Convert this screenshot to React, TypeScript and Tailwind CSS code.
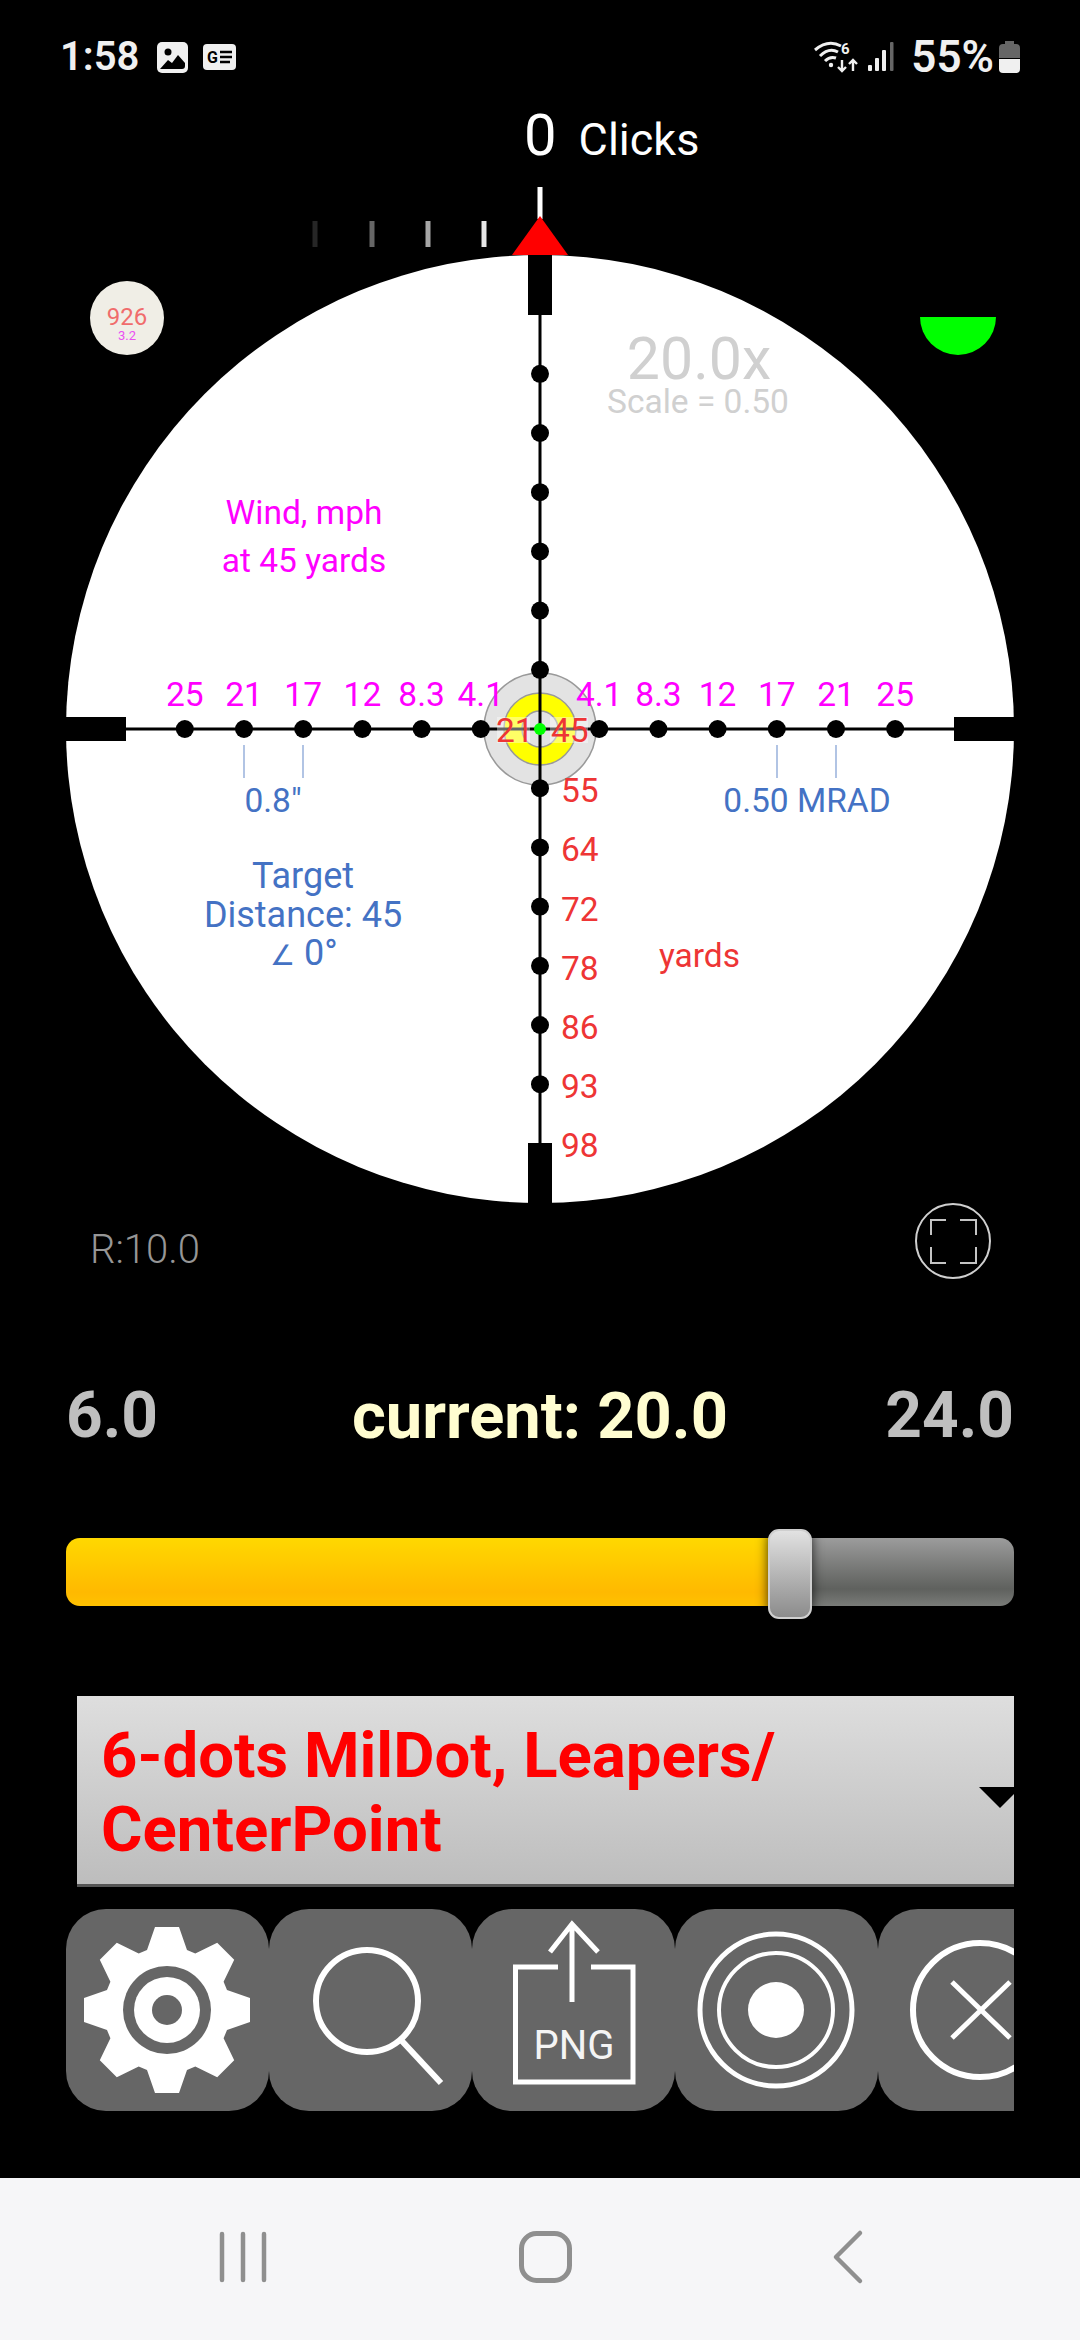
const DOT_STEP = 59.2
const STEPS = [1, 2, 3, 4, 5, 6]
const WIND = ['4.1', '8.3', '12', '17', '21', '25']
const RANGE = ['55', '64', '72', '78', '86', '93', '98']
const FADE_TICKS = [
  { x: 315, color: '#262626' },
  { x: 372, color: '#666666' },
  { x: 428, color: '#a6a6a6' },
  { x: 484, color: '#e6e6e6' },
]

function gearPath(cx: number, cy: number) {
  const pts: string[] = []
  const root = 60
  const tip = 83
  for (let i = 0; i < 8; i++) {
    const a = (i * Math.PI) / 4
    const c = Math.cos(a)
    const s = Math.sin(a)
    const local = [
      [-20, -root],
      [-12, -tip],
      [12, -tip],
      [20, -root],
    ]
    local.forEach(([x, y]) => {
      pts.push(`${(cx + x * c - y * s).toFixed(1)},${(cy + x * s + y * c).toFixed(1)}`)
    })
  }
  return `M${pts.join('L')}Z`
}

function StatusBar() {
  return (
    <div className="h-[100px] pt-[14px] pl-[60px] pr-[60px] flex items-center justify-between text-[#f0f0f0]">
      <div className="flex items-center">
        <span className="text-[40px] font-semibold leading-none">1:58</span>
        {/* gallery */}
        <svg className="ml-[18px]" width="31" height="31" viewBox="0 0 31 31">
          <rect width="31" height="31" rx="5" fill="#f0f0f0" />
          <circle cx="11" cy="10" r="3.5" fill="#000" />
          <path d="M3 27 L11 18 L15 21 L21 13 L28 21 L28 24 Q28 27 25 27 Z" fill="#000" />
        </svg>
        {/* news */}
        <svg className="ml-[15px]" width="33" height="26" viewBox="0 0 33 26">
          <rect width="33" height="26" rx="4" fill="#f0f0f0" />
          <text x="4" y="19" fontSize="16" fontWeight="700" fill="#000">G</text>
          <path d="M17 8 H29 M17 13 H29 M17 18 H27" stroke="#000" strokeWidth="2.4" />
        </svg>
      </div>
      <div className="flex items-center">
        {/* wifi 6 */}
        <svg width="48" height="32" viewBox="0 0 48 32" fill="none">
          <path d="M1 9 Q14 -2 27 5" stroke="#f0f0f0" strokeWidth="3" />
          <path d="M6 15 Q15 6 24 11" stroke="#f0f0f0" strokeWidth="3" />
          <path d="M11 20 Q16 15 22 17" stroke="#f0f0f0" strokeWidth="3" />
          <circle cx="17" cy="24" r="2.2" fill="#f0f0f0" />
          <text x="27" y="13" fontSize="15" fontWeight="700" fill="#f0f0f0">6</text>
          <path d="M28 19 V30 M24 26 L28 30 L32 26 M39 30 V19 M35 23 L39 19 L43 23" stroke="#f0f0f0" strokeWidth="2.4" />
        </svg>
        {/* signal */}
        <svg className="ml-[5px]" width="28" height="30" viewBox="0 0 28 30">
          <rect x="1" y="23" width="4" height="6" rx="1" fill="#f0f0f0" />
          <rect x="8" y="16" width="4" height="13" rx="1" fill="#f0f0f0" />
          <rect x="15" y="8" width="4" height="21" rx="1" fill="#f0f0f0" />
          <rect x="23" y="0" width="3.5" height="29" rx="1" fill="#666" />
        </svg>
        <span className="ml-[16px] text-[44px] font-semibold leading-none">55%</span>
        <svg className="ml-[5px]" width="21" height="32" viewBox="0 0 21 32">
          <path d="M6 0 H15 V3 H17 Q21 3 21 7 V17 H0 V7 Q0 3 4 3 H6 Z" fill="#666" />
          <path d="M0 18 H21 V28 Q21 32 17 32 H4 Q0 32 0 28 Z" fill="#f0f0f0" />
        </svg>
      </div>
    </div>
  )
}

function Reticle() {
  const cx = 540
  const cy = 729
  return (
    <svg className="block" width="1080" height="1103" viewBox="0 187 1080 1103">
      {/* windage ticks above the scope */}
      <rect x="537.5" y="187" width="5" height="32" fill="#fff" />
      {FADE_TICKS.map((t) => (
        <rect key={t.x} x={t.x - 2.5} y="221" width="5" height="26" fill={t.color} />
      ))}
      <circle cx={cx} cy={cy} r="474" fill="#fff" />
      <polygon points="540,216 568,255 512,255" fill="#ff0000" />

      {/* target rings */}
      <circle cx={cx} cy={cy} r="56" fill="#e3e3e3" stroke="#999" strokeWidth="1.5" />
      <circle cx={cx} cy={cy} r="36" fill="#ffff00" stroke="#999" strokeWidth="1.5" />
      <circle cx={cx} cy={cy} r="18" fill="#e3e3e3" stroke="#999" strokeWidth="1.5" />

      {/* crosshair */}
      <line x1="66" y1={cy} x2="1014" y2={cy} stroke="#000" strokeWidth="3" />
      <line x1={cx} y1="255" x2={cx} y2="1203" stroke="#000" strokeWidth="3" />
      <rect x="528" y="255" width="24" height="60" fill="#000" />
      <rect x="528" y="1143" width="24" height="60" fill="#000" />
      <rect x="66" y="717" width="60" height="24" fill="#000" />
      <rect x="954" y="717" width="60" height="24" fill="#000" />

      {STEPS.map((k) => (
        <g key={k} fill="#000">
          <circle cx={cx - k * DOT_STEP} cy={cy} r="9" />
          <circle cx={cx + k * DOT_STEP} cy={cy} r="9" />
          <circle cx={cx} cy={cy - k * DOT_STEP} r="9" />
          <circle cx={cx} cy={cy + k * DOT_STEP} r="9" />
        </g>
      ))}

      <rect x="497" y="717" width="33" height="26" fill="#fff" fillOpacity="0.4" />
      <rect x="550" y="717" width="38" height="26" fill="#fff" fillOpacity="0.4" />
      <circle cx={cx} cy={cy} r="6" fill="#00ff00" />

      {/* wind holds */}
      <g className="text-[33.5px] fill-[#ff00ff]" textAnchor="middle">
        {WIND.map((w, i) => (
          <g key={i}>
            <text x={cx - (i + 1) * DOT_STEP} y="706">{w}</text>
            <text x={cx + (i + 1) * DOT_STEP} y="706">{w}</text>
          </g>
        ))}
        <text x="304" y="524">Wind, mph</text>
        <text x="304" y="572">at 45 yards</text>
      </g>

      {/* range */}
      <g className="text-[33.5px] fill-[#ee3535]">
        {RANGE.map((r, i) => (
          <text key={r} x="561" y={cy + (i + 1) * DOT_STEP + 14}>{r}</text>
        ))}
        <text x="496" y="742">21</text>
        <text x="551" y="742">45</text>
        <text x="659" y="967">yards</text>
      </g>

      {/* scale */}
      <path d="M244 745 V778 M303 745 V778 M777 745 V778 M836 745 V778" stroke="#7f9dd2" strokeWidth="1.2" />
      <g className="text-[33.5px] fill-[#4472c4]" textAnchor="middle">
        <text x="273" y="812">0.8"</text>
        <text x="807" y="812">0.50 MRAD</text>
      </g>
      <g className="text-[36px] fill-[#4472c4]" textAnchor="middle">
        <text x="303" y="888">Target</text>
        <text x="303" y="927">Distance: 45</text>
        <text x="304" y="965">
          <tspan fontSize="28">∠</tspan> 0°
        </text>
      </g>

      <g className="fill-[#d0d0d0]" textAnchor="middle">
        <text x="699" y="379" className="text-[59px]">20.0x</text>
        <text x="698" y="413" className="text-[33.5px]">Scale = 0.50</text>
      </g>
    </svg>
  )
}

function Scope() {
  return (
    <div className="relative h-[1103px]">
      <Reticle />
      {/* ballistic badge */}
      <div className="absolute left-[90px] top-[94px] w-[74px] h-[74px] rounded-full bg-[#f0eee6] flex flex-col items-center justify-center pt-[11px]">
        <span className="text-[24px] leading-[24px] text-[#f06c6c]">926</span>
        <span className="text-[13px] leading-[13px] text-[#ea50f2]">3.2</span>
      </div>
      {/* level bubble */}
      <div className="absolute left-[920px] top-[130px] w-[76px] h-[38px] rounded-b-full bg-[#00ff00]" />
      <span className="absolute left-[90px] top-[1043px] text-[40px] leading-none font-light text-[#969696]">R:10.0</span>
      {/* fullscreen */}
      <svg className="absolute left-[915px] top-[1016px]" width="76" height="76" viewBox="0 0 76 76" fill="none">
        <circle cx="38" cy="38" r="37" stroke="#cfcfcf" strokeWidth="2" />
        <path d="M16 32 V17 H31 M45 17 H61 V32 M16 44 V60 H31 M45 60 H61 V44" stroke="#c4c4c4" strokeWidth="2" />
      </svg>
    </div>
  )
}

function ZoomSlider() {
  return (
    <>
      <div className="mt-[94px] mx-[66px] grid grid-cols-[1fr_auto_1fr] text-[64px] leading-none font-bold">
        <span className="text-[#bfbfbf]">6.0</span>
        <span className="text-[65px] text-[#fffdd0]">current: 20.0</span>
        <span className="text-right text-[#bfbfbf]">24.0</span>
      </div>
      <div className="relative mt-[89px] mx-[66px] h-[68px] flex">
        <div className="w-[705px] rounded-l-[14px] bg-linear-to-b from-[#ffd800] via-[#ffb900] via-80% to-[#ffc200]" />
        <div className="flex-1 rounded-r-[14px] bg-linear-to-b from-[#9c9c9c] via-[#5f615e] via-75% to-[#7a7c79]" />
        <div className="absolute left-[702px] top-[-9px] w-[44px] h-[90px] rounded-[11px] border-2 border-[#cfcfcf] bg-linear-to-b from-[#e2e2e2] to-[#8c8c8c] shadow-[0_0_12px_rgba(0,0,0,0.75)]" />
      </div>
    </>
  )
}

function ReticlePicker() {
  return (
    <div className="relative mt-[90px] ml-[77px] mr-[66px] h-[191px] overflow-hidden bg-linear-to-b from-[#dedede] to-[#bdbdbd] border-b-[3px] border-[#555] pl-[24px] pt-[23px]">
      <div className="text-[63.5px] leading-[74px] font-bold text-[#ff0000] whitespace-nowrap">
        6-dots MilDot, Leapers/
        <br />
        CenterPoint
      </div>
      <svg className="absolute left-[902px] top-[91px]" width="44" height="22" viewBox="0 0 44 22">
        <polygon points="0,0 42,0 21,21" fill="#000" />
      </svg>
    </div>
  )
}

function ToolButton({ children }: { children: React.ReactNode }) {
  return (
    <button className="w-[203px] h-[202px] shrink-0 rounded-[40px] bg-[#666666]">
      <svg className="block" width="203" height="202" viewBox="0 0 203 202" fill="none">
        {children}
      </svg>
    </button>
  )
}

function Toolbar() {
  return (
    <div className="mt-[22px] mx-[66px] flex overflow-hidden">
      <ToolButton>
        <path d={gearPath(101, 101)} fill="#fff" />
        <circle cx="101" cy="101" r="62" fill="#fff" />
        <circle cx="101" cy="101" r="44" fill="#666" />
        <circle cx="101" cy="101" r="33" fill="#fff" />
        <circle cx="101" cy="101" r="15" fill="#666" />
      </ToolButton>
      <ToolButton>
        <circle cx="98" cy="92" r="51" stroke="#fff" strokeWidth="6" />
        <line x1="132" y1="131" x2="172" y2="174" stroke="#fff" strokeWidth="6" />
      </ToolButton>
      <ToolButton>
        <path d="M86 58 H43.5 V173 H161 V58 H119" stroke="#fff" strokeWidth="5" />
        <path d="M100 15 V93 M78 43 L100 15 L126 43" stroke="#fff" strokeWidth="5" />
        <text x="102" y="150" textAnchor="middle" fontSize="40" fill="#f4f4f4">PNG</text>
      </ToolButton>
      <ToolButton>
        <circle cx="101" cy="101" r="76" stroke="#fff" strokeWidth="5" />
        <circle cx="101" cy="101" r="57" stroke="#fff" strokeWidth="4" />
        <circle cx="101" cy="101" r="28" fill="#fff" />
      </ToolButton>
      <ToolButton>
        <circle cx="102" cy="101" r="67" stroke="#fff" strokeWidth="6" />
        <path d="M74 73 L132 129 M132 73 L74 129" stroke="#fff" strokeWidth="5" />
      </ToolButton>
    </div>
  )
}

function NavBar() {
  return (
    <div className="mt-auto h-[162px] bg-[#f6f6f8]">
      <svg className="block" width="1080" height="162" viewBox="0 2178 1080 162" fill="none">
        <path
          d="M222 2234 V2280 M243 2234 V2280 M264 2234 V2280"
          stroke="#8f8f8f"
          strokeWidth="4.5"
          strokeLinecap="round"
        />
        <rect x="521.5" y="2233.5" width="48" height="47" rx="15" stroke="#8f8f8f" strokeWidth="5" />
        <path d="M860 2233 L836 2257 L860 2281" stroke="#8f8f8f" strokeWidth="4.5" strokeLinecap="round" strokeLinejoin="round" />
      </svg>
    </div>
  )
}

export default function App() {
  return (
    <div className="w-[1080px] h-[2340px] bg-black flex flex-col overflow-hidden font-['Roboto',sans-serif]">
      <StatusBar />
      <div className="h-[87px] pt-[6px] pl-[524px] flex items-baseline gap-[22px] text-white">
        <span className="text-[58px] leading-none">0</span>
        <span className="text-[45px] leading-none">Clicks</span>
      </div>
      <Scope />
      <ZoomSlider />
      <ReticlePicker />
      <Toolbar />
      <NavBar />
    </div>
  )
}
